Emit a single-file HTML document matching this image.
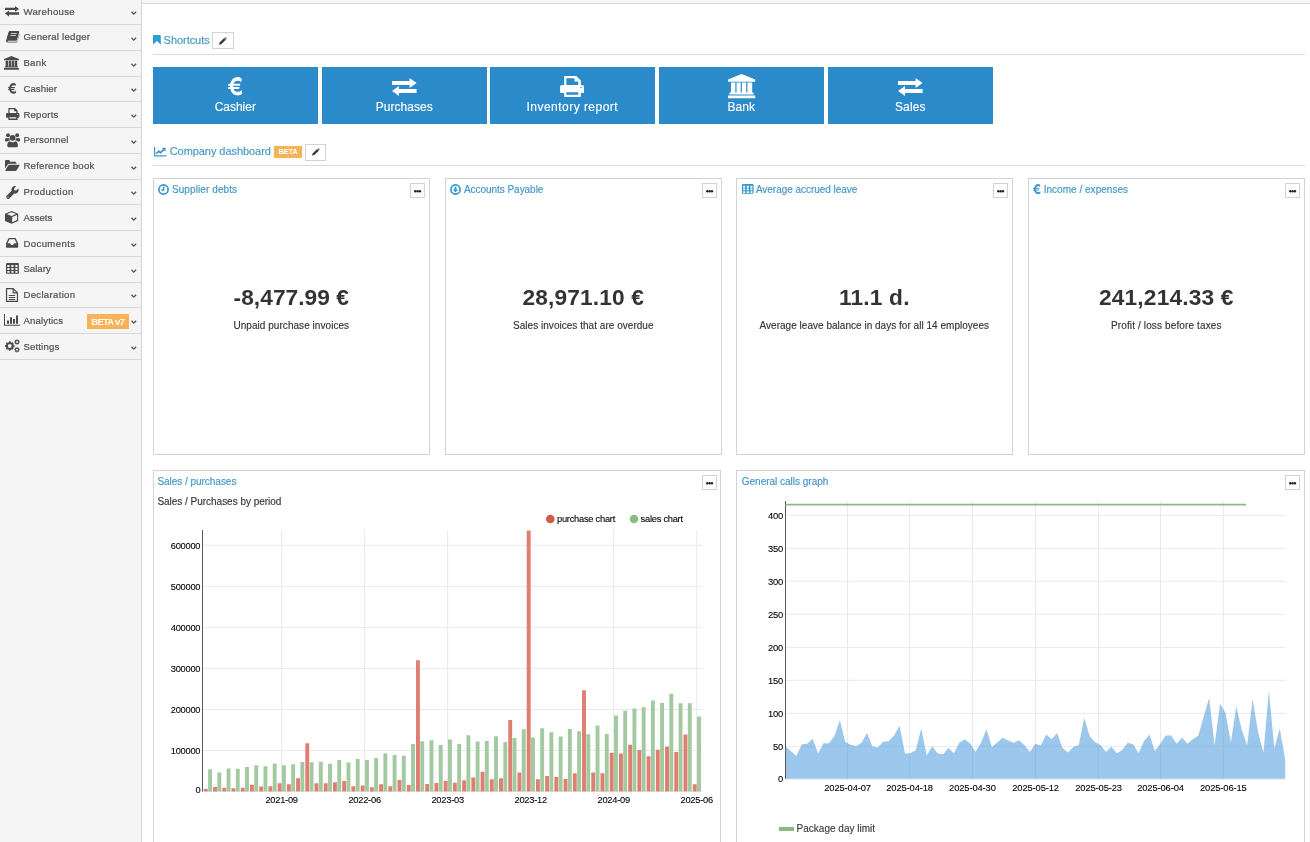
<!DOCTYPE html><html lang="en"><head><meta charset="utf-8"><title>Company dashboard</title><style>
html,body{margin:0;padding:0}
body{width:1310px;height:842px;overflow:hidden;background:#fff;position:relative;font-family:"Liberation Sans",sans-serif;}
#root{position:absolute;left:0;top:0;width:1310px;height:842px;will-change:transform}
.t{position:absolute;white-space:nowrap;display:block}
.ic{position:absolute;display:block;overflow:visible}
.abs{position:absolute;display:block;box-sizing:border-box}
#side{left:0;top:0;width:142px;height:842px;background:#f5f5f5;border-right:1px solid #d6d6d6}
.sep{left:0;width:141px;height:1px;background:#d7d7d7}
.hr{height:1px;background:#dcdcdc;left:153px;width:1152px}
.tile{background:#2a8aca;height:57px;width:165px;top:67px}
.card{border:1px solid #d3d3d3;background:#fff}
.btn{border:1px solid #d2d2d2;background:#fff}
.badge{background:#f7b356;color:#fff}
svg text{font-family:"Liberation Sans",sans-serif}

</style></head><body><div id="root">
<div class="abs" style="left:142px;top:0;width:1168px;height:4px;background:#f5f5f5;border-bottom:1px solid #d6d6d6"></div>
<div id="side" class="abs"></div>
<div class="abs sep" style="top:24px"></div>
<span class="t" style="left:23.40px;top:6.62px;font-size:9.6px;line-height:9.6px;color:#505050;letter-spacing:0.323px;-webkit-text-stroke:.2px #505050;">Warehouse</span>
<svg class="ic" style="left:4.90px;top:6.10px;color:#4a4a4a" width="14" height="10.4" viewBox="0 0 14 10.4" preserveAspectRatio="none" fill="currentColor"><path d="M0 1.75H10V0L14 2.9L10 5.8V4.05H0ZM14 6.35H4V4.6L0 7.5L4 10.4V8.65H14Z"/></svg>
<svg class="ic" style="left:131.00px;top:11.00px;color:#555" width="5.6" height="4.2" viewBox="0 0 5.6 4.2" preserveAspectRatio="none" fill="currentColor"><path fill="none" stroke="currentColor" stroke-width="1.35" d="M.5.7L2.8 3.1L5.1.7"/></svg>
<div class="abs sep" style="top:50px"></div>
<span class="t" style="left:23.40px;top:32.39px;font-size:9.6px;line-height:9.6px;color:#505050;letter-spacing:0.241px;-webkit-text-stroke:.2px #505050;">General ledger</span>
<svg class="ic" style="left:5.50px;top:31.15px;color:#4a4a4a" width="13.4" height="11.6" viewBox="0 0 14 12" preserveAspectRatio="none" fill="currentColor"><path fill-rule="evenodd" d="M3.9 0H13.1Q14.1 0 13.8 1L11.5 9.2Q11.3 10 10.4 10H2.2Q1.5 10 1.6 10.5Q1.7 11 2.4 11H11Q11.6 11 11.8 10.4L13.9 3.2Q14.2 3.6 14 4.2L11.9 11.1Q11.6 12 10.6 12H1.9Q.8 12 .3 11.2Q-.2 10.4.2 9.6L2.7.9Q3 0 3.9 0ZM5.4 2.2L5.2 3H11L11.2 2.2ZM4.8 4.2L4.6 5H10.4L10.6 4.2Z"/></svg>
<svg class="ic" style="left:131.00px;top:36.77px;color:#555" width="5.6" height="4.2" viewBox="0 0 5.6 4.2" preserveAspectRatio="none" fill="currentColor"><path fill="none" stroke="currentColor" stroke-width="1.35" d="M.5.7L2.8 3.1L5.1.7"/></svg>
<div class="abs sep" style="top:76px"></div>
<span class="t" style="left:23.40px;top:58.16px;font-size:9.6px;line-height:9.6px;color:#505050;letter-spacing:0.308px;-webkit-text-stroke:.2px #505050;">Bank</span>
<svg class="ic" style="left:4.00px;top:56.20px;color:#4a4a4a" width="14.9" height="13.7" viewBox="0 0 15 14" preserveAspectRatio="none" fill="currentColor"><path d="M7.5 0L15 3.1V4.4H0V3.1ZM1.64 4.85H4.05V10.67H1.64ZM4.7 4.85H7V10.67H4.7ZM7.66 4.85H10.05V10.67H7.66ZM10.72 4.85H13.35V10.67H10.72ZM.77 10.67H14.1V11.85H.77ZM0 12.4H15V14H0Z"/></svg>
<svg class="ic" style="left:131.00px;top:62.54px;color:#555" width="5.6" height="4.2" viewBox="0 0 5.6 4.2" preserveAspectRatio="none" fill="currentColor"><path fill="none" stroke="currentColor" stroke-width="1.35" d="M.5.7L2.8 3.1L5.1.7"/></svg>
<div class="abs sep" style="top:101px"></div>
<span class="t" style="left:23.40px;top:83.93px;font-size:9.6px;line-height:9.6px;color:#505050;letter-spacing:0.090px;-webkit-text-stroke:.2px #505050;">Cashier</span>
<svg class="ic" style="left:7.90px;top:83.05px;color:#4a4a4a" width="8.3" height="10.7" viewBox="0 0 9.4 10.8" preserveAspectRatio="none" fill="currentColor"><path d="M9 1.2L8.5 3Q7.6 2.2 6.4 2.2Q4.3 2.2 3.6 4H8L7.7 5.1H3.3Q3.3 5.5 3.3 5.9H7.5L7.2 7H3.6Q4.3 8.7 6.4 8.7Q7.7 8.7 8.8 7.8L9.2 9.8Q8 10.8 6.3 10.8Q2.5 10.8 1.5 7H0L.3 5.9H1.3Q1.2 5.5 1.3 5.1H0L.3 4H1.5Q2.5 0 6.4 0Q7.9 0 9 1.2Z"/></svg>
<svg class="ic" style="left:131.00px;top:88.31px;color:#555" width="5.6" height="4.2" viewBox="0 0 5.6 4.2" preserveAspectRatio="none" fill="currentColor"><path fill="none" stroke="currentColor" stroke-width="1.35" d="M.5.7L2.8 3.1L5.1.7"/></svg>
<div class="abs sep" style="top:127px"></div>
<span class="t" style="left:23.40px;top:109.70px;font-size:9.6px;line-height:9.6px;color:#505050;letter-spacing:0.234px;-webkit-text-stroke:.2px #505050;">Reports</span>
<svg class="ic" style="left:5.50px;top:107.90px;color:#4a4a4a" width="13.4" height="11.9" viewBox="0 0 14 12.4" preserveAspectRatio="none" fill="currentColor"><path fill-rule="evenodd" d="M2.45 0H9.5L12.15 2.6V5.3H12.8Q14 5.3 14 6.5V9.4Q14 10.05 13.4 10.05H12.15V12.4H2.45V10.05H.6Q0 10.05 0 9.4V6.5Q0 5.3 1.2 5.3H2.45ZM3.7 1.35H8.45V3.3H10.65V5.3H3.7ZM3.7 9.6H10.65V11.05H3.7ZM11.8 6.75A.47.47 0 1 0 12.74 6.75A.47.47 0 1 0 11.8 6.75Z"/></svg>
<svg class="ic" style="left:131.00px;top:114.08px;color:#555" width="5.6" height="4.2" viewBox="0 0 5.6 4.2" preserveAspectRatio="none" fill="currentColor"><path fill="none" stroke="currentColor" stroke-width="1.35" d="M.5.7L2.8 3.1L5.1.7"/></svg>
<div class="abs sep" style="top:153px"></div>
<span class="t" style="left:23.40px;top:135.47px;font-size:9.6px;line-height:9.6px;color:#505050;letter-spacing:0.225px;-webkit-text-stroke:.2px #505050;">Personnel</span>
<svg class="ic" style="left:4.50px;top:132.75px;color:#4a4a4a" width="15.2" height="14.2" viewBox="0 0 15 14" preserveAspectRatio="none" fill="currentColor"><circle cx="7.5" cy="4.8" r="2.8"/><path d="M3.4 14Q2.2 14 2.2 12.6Q2.2 9 4.6 8.2Q5.8 9.2 7.5 9.2Q9.2 9.2 10.4 8.2Q12.8 9 12.8 12.6Q12.8 14 11.6 14Z"/><circle cx="3" cy="2.2" r="1.9"/><circle cx="12" cy="2.2" r="1.9"/><path d="M0 7.2Q0 4.9 1.4 4.7Q2.1 5.2 3 5.2Q3.7 5.2 4.3 4.9Q4.2 6.2 5 7.4Q3 7.6 2.2 8.4H1Q0 8.4 0 7.2ZM15 7.2Q15 4.9 13.6 4.7Q12.9 5.2 12 5.2Q11.3 5.2 10.7 4.9Q10.8 6.2 10 7.4Q12 7.6 12.8 8.4H14Q15 8.4 15 7.2Z"/></svg>
<svg class="ic" style="left:131.00px;top:139.85px;color:#555" width="5.6" height="4.2" viewBox="0 0 5.6 4.2" preserveAspectRatio="none" fill="currentColor"><path fill="none" stroke="currentColor" stroke-width="1.35" d="M.5.7L2.8 3.1L5.1.7"/></svg>
<div class="abs sep" style="top:179px"></div>
<span class="t" style="left:23.40px;top:161.24px;font-size:9.6px;line-height:9.6px;color:#505050;letter-spacing:0.244px;-webkit-text-stroke:.2px #505050;">Reference book</span>
<svg class="ic" style="left:4.50px;top:159.80px;color:#4a4a4a" width="14.7" height="11" viewBox="0 0 15 11" preserveAspectRatio="none" fill="currentColor"><path d="M0 1.2Q0 0 1.2 0H3.8Q5 0 5 1.2V1.7H10.4Q11.6 1.7 11.6 2.9V3.8H4.5Q3.2 3.8 2.4 4.9L0 8.4ZM3.2 5.5Q3.8 4.7 4.8 4.7H14.4Q15.4 4.7 14.8 5.6L12.1 9.9Q11.4 11 10.2 11H.9Q-.1 11 .6 10Z"/></svg>
<svg class="ic" style="left:131.00px;top:165.62px;color:#555" width="5.6" height="4.2" viewBox="0 0 5.6 4.2" preserveAspectRatio="none" fill="currentColor"><path fill="none" stroke="currentColor" stroke-width="1.35" d="M.5.7L2.8 3.1L5.1.7"/></svg>
<div class="abs sep" style="top:204px"></div>
<span class="t" style="left:23.40px;top:187.01px;font-size:9.6px;line-height:9.6px;color:#505050;letter-spacing:0.447px;-webkit-text-stroke:.2px #505050;">Production</span>
<svg class="ic" style="left:6.10px;top:185.85px;color:#4a4a4a" width="12.5" height="13.1" viewBox="0 0 12.6 13.2" preserveAspectRatio="none" fill="currentColor"><path d="M12.4 2.5L10.3 4.6L8.5 4.2L8.1 2.4L10.2.3A3.6 3.6 0 0 0 5.6 4.9L.4 10.1Q-.3 10.9.4 11.9L1.3 12.8Q2.3 13.5 3.1 12.8L8.3 7.6A3.6 3.6 0 0 0 12.4 2.5ZM1.4 11.1A.6.6 0 1 0 2.6 11.1A.6.6 0 1 0 1.4 11.1Z" fill-rule="evenodd"/></svg>
<svg class="ic" style="left:131.00px;top:191.39px;color:#555" width="5.6" height="4.2" viewBox="0 0 5.6 4.2" preserveAspectRatio="none" fill="currentColor"><path fill="none" stroke="currentColor" stroke-width="1.35" d="M.5.7L2.8 3.1L5.1.7"/></svg>
<div class="abs sep" style="top:230px"></div>
<span class="t" style="left:23.40px;top:212.78px;font-size:9.6px;line-height:9.6px;color:#505050;letter-spacing:0.021px;-webkit-text-stroke:.2px #505050;">Assets</span>
<svg class="ic" style="left:4.90px;top:211.00px;color:#4a4a4a" width="13.2" height="12.8" viewBox="0 0 13.2 12.8" preserveAspectRatio="none" fill="currentColor"><path d="M6.6 0L13.2 2.7V9.9L6.6 12.8L0 9.9V2.7ZM6.6 1.2L2 3.1L6.6 5L11.2 3.1ZM7.2 6V11.3L12.1 9.1V4Z" fill-rule="evenodd"/></svg>
<svg class="ic" style="left:131.00px;top:217.16px;color:#555" width="5.6" height="4.2" viewBox="0 0 5.6 4.2" preserveAspectRatio="none" fill="currentColor"><path fill="none" stroke="currentColor" stroke-width="1.35" d="M.5.7L2.8 3.1L5.1.7"/></svg>
<div class="abs sep" style="top:256px"></div>
<span class="t" style="left:23.40px;top:238.55px;font-size:9.6px;line-height:9.6px;color:#505050;letter-spacing:0.396px;-webkit-text-stroke:.2px #505050;">Documents</span>
<svg class="ic" style="left:5.90px;top:238.15px;color:#4a4a4a" width="12.2" height="9.7" viewBox="0 0 12.2 9.8" preserveAspectRatio="none" fill="currentColor"><path fill-rule="evenodd" d="M2.7 0H9.5L12.2 5.3V9Q12.2 9.8 11.4 9.8H.8Q0 9.8 0 9V5.3ZM3.5 1.2L1.6 5.4H4.2L5 7H7.2L8 5.4H10.6L8.7 1.2Z"/></svg>
<svg class="ic" style="left:131.00px;top:242.93px;color:#555" width="5.6" height="4.2" viewBox="0 0 5.6 4.2" preserveAspectRatio="none" fill="currentColor"><path fill="none" stroke="currentColor" stroke-width="1.35" d="M.5.7L2.8 3.1L5.1.7"/></svg>
<div class="abs sep" style="top:282px"></div>
<span class="t" style="left:23.40px;top:264.32px;font-size:9.6px;line-height:9.6px;color:#505050;letter-spacing:0.019px;-webkit-text-stroke:.2px #505050;">Salary</span>
<svg class="ic" style="left:5.70px;top:263.10px;color:#4a4a4a" width="12.9" height="10.8" viewBox="0 0 13 10.8" preserveAspectRatio="none" fill="currentColor"><path fill-rule="evenodd" d="M1.1 0H11.9Q13 0 13 1.1V9.7Q13 10.8 11.9 10.8H1.1Q0 10.8 0 9.7V1.1Q0 0 1.1 0ZM1.3 1.9V4.0H3.6V1.9ZM5.35 1.9V4.0H7.65V1.9ZM9.4 1.9V4.0H11.7V1.9ZM1.3 5.0V7.0H3.6V5.0ZM5.35 5.0V7.0H7.65V5.0ZM9.4 5.0V7.0H11.7V5.0ZM1.3 8.0V9.8H3.6V8.0ZM5.35 8.0V9.8H7.65V8.0ZM9.4 8.0V9.8H11.7V8.0Z"/></svg>
<svg class="ic" style="left:131.00px;top:268.70px;color:#555" width="5.6" height="4.2" viewBox="0 0 5.6 4.2" preserveAspectRatio="none" fill="currentColor"><path fill="none" stroke="currentColor" stroke-width="1.35" d="M.5.7L2.8 3.1L5.1.7"/></svg>
<div class="abs sep" style="top:307px"></div>
<span class="t" style="left:23.40px;top:290.09px;font-size:9.6px;line-height:9.6px;color:#505050;letter-spacing:0.317px;-webkit-text-stroke:.2px #505050;">Declaration</span>
<svg class="ic" style="left:6.00px;top:288.00px;color:#4a4a4a" width="12" height="14" viewBox="0 0 12 14" preserveAspectRatio="none" fill="currentColor"><path fill="none" stroke="currentColor" stroke-width="1.2" d="M.55.55H7.2L11.45 4.8V13.45H.55ZM7.2.55V4.8H11.45"/><path fill="none" stroke="currentColor" stroke-width="1" d="M2.8 7.5H9.2M2.8 9.5H9.2M2.8 11.5H9.2"/></svg>
<svg class="ic" style="left:131.00px;top:294.47px;color:#555" width="5.6" height="4.2" viewBox="0 0 5.6 4.2" preserveAspectRatio="none" fill="currentColor"><path fill="none" stroke="currentColor" stroke-width="1.35" d="M.5.7L2.8 3.1L5.1.7"/></svg>
<div class="abs sep" style="top:333px"></div>
<span class="t" style="left:23.40px;top:315.86px;font-size:9.6px;line-height:9.6px;color:#505050;letter-spacing:0.164px;-webkit-text-stroke:.2px #505050;">Analytics</span>
<svg class="ic" style="left:3.90px;top:314.20px;color:#4a4a4a" width="16" height="11.8" viewBox="0 0 16 11.8" preserveAspectRatio="none" fill="currentColor"><path d="M0 0H1V10.8H16V11.8H0ZM3 6.6H5V9.8H3ZM6 3.3H8V9.8H6ZM9 5H11V9.8H9ZM12 1.4H14V9.8H12Z"/></svg>
<svg class="ic" style="left:131.00px;top:320.24px;color:#555" width="5.6" height="4.2" viewBox="0 0 5.6 4.2" preserveAspectRatio="none" fill="currentColor"><path fill="none" stroke="currentColor" stroke-width="1.35" d="M.5.7L2.8 3.1L5.1.7"/></svg>
<div class="abs sep" style="top:359px"></div>
<span class="t" style="left:23.40px;top:341.63px;font-size:9.6px;line-height:9.6px;color:#505050;letter-spacing:0.161px;-webkit-text-stroke:.2px #505050;">Settings</span>
<svg class="ic" style="left:4.50px;top:339.25px;color:#4a4a4a" width="15" height="13.7" viewBox="0 0 15 13.7" preserveAspectRatio="none" fill="currentColor"><path fill-rule="evenodd" d="M8.63 6.08L9.55 6.29L9.55 7.71L8.63 7.92L8.16 9.06L8.66 9.85L7.65 10.86L6.86 10.36L5.72 10.83L5.51 11.75L4.09 11.75L3.88 10.83L2.74 10.36L1.95 10.86L0.94 9.85L1.44 9.06L0.97 7.92L0.05 7.71L0.05 6.29L0.97 6.08L1.44 4.94L0.94 4.15L1.95 3.14L2.74 3.64L3.88 3.17L4.09 2.25L5.51 2.25L5.72 3.17L6.86 3.64L7.65 3.14L8.66 4.15L8.16 4.94ZM2.90 7.00A1.9 1.9 0 1 0 6.70 7.00A1.9 1.9 0 1 0 2.90 7.00ZM13.96 2.53L14.77 2.58L14.77 3.42L13.96 3.47L13.72 4.05L14.25 4.66L13.66 5.25L13.05 4.72L12.47 4.96L12.42 5.77L11.58 5.77L11.53 4.96L10.95 4.72L10.34 5.25L9.75 4.66L10.28 4.05L10.04 3.47L9.23 3.42L9.23 2.58L10.04 2.53L10.28 1.95L9.75 1.34L10.34 0.75L10.95 1.28L11.53 1.04L11.58 0.23L12.42 0.23L12.47 1.04L13.05 1.28L13.66 0.75L14.25 1.34L13.72 1.95ZM11.00 3.00A1.0 1.0 0 1 0 13.00 3.00A1.0 1.0 0 1 0 11.00 3.00ZM13.96 10.23L14.77 10.28L14.77 11.12L13.96 11.17L13.72 11.75L14.25 12.36L13.66 12.95L13.05 12.42L12.47 12.66L12.42 13.47L11.58 13.47L11.53 12.66L10.95 12.42L10.34 12.95L9.75 12.36L10.28 11.75L10.04 11.17L9.23 11.12L9.23 10.28L10.04 10.23L10.28 9.65L9.75 9.04L10.34 8.45L10.95 8.98L11.53 8.74L11.58 7.93L12.42 7.93L12.47 8.74L13.05 8.98L13.66 8.45L14.25 9.04L13.72 9.65ZM11.00 10.70A1.0 1.0 0 1 0 13.00 10.70A1.0 1.0 0 1 0 11.00 10.70Z"/></svg>
<svg class="ic" style="left:131.00px;top:346.01px;color:#555" width="5.6" height="4.2" viewBox="0 0 5.6 4.2" preserveAspectRatio="none" fill="currentColor"><path fill="none" stroke="currentColor" stroke-width="1.35" d="M.5.7L2.8 3.1L5.1.7"/></svg>
<div class="abs badge" style="left:87px;top:314px;width:42px;height:15px"></div>
<span class="t" style="left:91.30px;top:317.16px;font-size:9.5px;line-height:9.5px;color:#fff;font-weight:bold;letter-spacing:-0.753px;">BETA v7</span>
<svg class="ic" style="left:153.20px;top:35.40px;color:#2f9bd6" width="7.8" height="9.4" viewBox="0 0 7.8 9.4" preserveAspectRatio="none" fill="currentColor"><path d="M.8 0H7Q7.8 0 7.8.8V9.4L3.9 6L0 9.4V.8Q0 0 .8 0Z"/></svg>
<span class="t" style="left:163.60px;top:34.69px;font-size:11px;line-height:11px;color:#3f95c5;-webkit-text-stroke:.14px #3f95c5;letter-spacing:-0.046px;">Shortcuts</span>
<div class="abs btn" style="left:212px;top:32px;width:22px;height:17px"></div>
<svg class="ic" style="left:219.00px;top:37.00px;color:#3a3a3a" width="8.0" height="7.7" viewBox="0 0 8.5 8.5" preserveAspectRatio="none" fill="currentColor"><path d="M0 8.5L.6 6.1L5.5 1.2L7.3 3L2.4 7.9ZM6.1.6Q6.6.1 7.1.6L7.9 1.4Q8.4 1.9 7.9 2.4L7.7 2.6L5.9.8Z"/></svg>
<div class="abs hr" style="top:54px"></div>
<div class="abs tile" style="left:153px"></div>
<span class="t" style="left:155.30px;width:160px;text-align:center;top:101.04px;font-size:12px;line-height:12px;color:#fff;-webkit-text-stroke:.14px #fff;letter-spacing:-0.027px;"><span>Cashier</span></span>
<svg class="ic" style="left:228.05px;top:77.30px;color:#fff" width="14.5" height="18.4" viewBox="0 0 9.4 10.8" preserveAspectRatio="none" fill="currentColor"><path d="M9 1.2L8.5 3Q7.6 2.2 6.4 2.2Q4.3 2.2 3.6 4H8L7.7 5.1H3.3Q3.3 5.5 3.3 5.9H7.5L7.2 7H3.6Q4.3 8.7 6.4 8.7Q7.7 8.7 8.8 7.8L9.2 9.8Q8 10.8 6.3 10.8Q2.5 10.8 1.5 7H0L.3 5.9H1.3Q1.2 5.5 1.3 5.1H0L.3 4H1.5Q2.5 0 6.4 0Q7.9 0 9 1.2Z"/></svg>
<div class="abs tile" style="left:322px"></div>
<span class="t" style="left:324.30px;width:160px;text-align:center;top:101.04px;font-size:12px;line-height:12px;color:#fff;-webkit-text-stroke:.14px #fff;letter-spacing:0.025px;"><span>Purchases</span></span>
<svg class="ic" style="left:392.00px;top:78.30px;color:#fff" width="24.6" height="17.9" viewBox="0 0 14 10.4" preserveAspectRatio="none" fill="currentColor"><path d="M0 1.75H10V0L14 2.9L10 5.8V4.05H0ZM14 6.35H4V4.6L0 7.5L4 10.4V8.65H14Z"/></svg>
<div class="abs tile" style="left:490px"></div>
<span class="t" style="left:492.30px;width:160px;text-align:center;top:101.04px;font-size:12px;line-height:12px;color:#fff;-webkit-text-stroke:.14px #fff;letter-spacing:0.470px;"><span>Inventory report</span></span>
<svg class="ic" style="left:560.30px;top:75.60px;color:#fff" width="24" height="21" viewBox="0 0 14 12.4" preserveAspectRatio="none" fill="currentColor"><path fill-rule="evenodd" d="M2.45 0H9.5L12.15 2.6V5.3H12.8Q14 5.3 14 6.5V9.4Q14 10.05 13.4 10.05H12.15V12.4H2.45V10.05H.6Q0 10.05 0 9.4V6.5Q0 5.3 1.2 5.3H2.45ZM3.7 1.35H8.45V3.3H10.65V5.3H3.7ZM3.7 9.6H10.65V11.05H3.7ZM11.8 6.75A.47.47 0 1 0 12.74 6.75A.47.47 0 1 0 11.8 6.75Z"/></svg>
<div class="abs tile" style="left:659px"></div>
<span class="t" style="left:661.30px;width:160px;text-align:center;top:101.04px;font-size:12px;line-height:12px;color:#fff;-webkit-text-stroke:.14px #fff;letter-spacing:0.047px;"><span>Bank</span></span>
<svg class="ic" style="left:727.70px;top:74.20px;color:#fff" width="27.2" height="24.3" viewBox="0 0 15 14" preserveAspectRatio="none" fill="currentColor"><path d="M7.5 0L15 3.1V4.4H0V3.1ZM1.64 4.85H4.05V10.67H1.64ZM4.7 4.85H7V10.67H4.7ZM7.66 4.85H10.05V10.67H7.66ZM10.72 4.85H13.35V10.67H10.72ZM.77 10.67H14.1V11.85H.77ZM0 12.4H15V14H0Z"/></svg>
<div class="abs tile" style="left:828px"></div>
<span class="t" style="left:830.30px;width:160px;text-align:center;top:101.04px;font-size:12px;line-height:12px;color:#fff;-webkit-text-stroke:.14px #fff;letter-spacing:0.117px;"><span>Sales</span></span>
<svg class="ic" style="left:898.00px;top:78.30px;color:#fff" width="24.6" height="17.9" viewBox="0 0 14 10.4" preserveAspectRatio="none" fill="currentColor"><path d="M0 1.75H10V0L14 2.9L10 5.8V4.05H0ZM14 6.35H4V4.6L0 7.5L4 10.4V8.65H14Z"/></svg>
<svg class="ic" style="left:153.80px;top:146.80px;color:#3f95c5" width="12.4" height="9.4" viewBox="0 0 12.4 9.6" preserveAspectRatio="none" fill="currentColor"><path d="M0 0H1.2V8.4H12.4V9.6H0Z"/><path fill="none" stroke="currentColor" stroke-width="1.8" d="M2.2 6.9L4.7 4.3L6.4 6L9.9 2.4"/><path d="M7.8.7H11.6V4.5Z"/></svg>
<span class="t" style="left:169.70px;top:145.69px;font-size:11px;line-height:11px;color:#3f95c5;-webkit-text-stroke:.14px #3f95c5;letter-spacing:-0.058px;">Company dashboard</span>
<div class="abs badge" style="left:274px;top:146px;width:28px;height:12px"></div>
<span class="t" style="left:278.60px;top:148.45px;font-size:7.5px;line-height:7.5px;color:#fff;font-weight:bold;letter-spacing:-0.225px;">BETA</span>
<div class="abs btn" style="left:305px;top:144px;width:21px;height:17px"></div>
<svg class="ic" style="left:311.80px;top:148.30px;color:#3a3a3a" width="8.0" height="7.5" viewBox="0 0 8.5 8.5" preserveAspectRatio="none" fill="currentColor"><path d="M0 8.5L.6 6.1L5.5 1.2L7.3 3L2.4 7.9ZM6.1.6Q6.6.1 7.1.6L7.9 1.4Q8.4 1.9 7.9 2.4L7.7 2.6L5.9.8Z"/></svg>
<div class="abs hr" style="top:165px"></div>
<div class="abs card" style="left:153px;top:178px;width:277px;height:277px"></div>
<svg class="ic" style="left:157.60px;top:183.90px;color:#3398cc" width="11" height="11" viewBox="0 0 10.6 10.6" preserveAspectRatio="none" fill="currentColor"><circle cx="5.3" cy="5.3" r="4.45" fill="none" stroke="currentColor" stroke-width="1.6"/><path fill="none" stroke="currentColor" stroke-width="1.3" d="M5.5 2.5V5.8H3.2"/></svg>
<span class="t" style="left:171.90px;top:185.23px;font-size:10px;line-height:10px;color:#3f95c5;-webkit-text-stroke:.14px #3f95c5;letter-spacing:0.097px;">Supplier debts</span>
<div class="abs btn" style="left:410px;top:183px;width:15px;height:15px"></div>
<svg class="ic" style="left:413.90px;top:189.50px;color:#222" width="7.2" height="2.6" viewBox="0 0 7.2 2.6" preserveAspectRatio="none" fill="currentColor"><circle cx="1.25" cy="1.3" r="1.2"/><circle cx="3.6" cy="1.3" r="1.2"/><circle cx="5.95" cy="1.3" r="1.2"/></svg>
<span class="t" style="left:153.30px;width:276px;text-align:center;top:285.98px;font-size:22.7px;line-height:22.7px;color:#333;font-weight:bold;letter-spacing:0.060px;"><span>-8,477.99 €</span></span>
<span class="t" style="left:153.30px;width:276px;text-align:center;top:320.54px;font-size:10px;line-height:10px;color:#333;-webkit-text-stroke:.14px #333;letter-spacing:0.047px;"><span>Unpaid purchase invoices</span></span>
<div class="abs card" style="left:445px;top:178px;width:277px;height:277px"></div>
<svg class="ic" style="left:449.60px;top:183.90px;color:#3398cc" width="11" height="11" viewBox="0 0 10.6 10.6" preserveAspectRatio="none" fill="currentColor"><circle cx="5.3" cy="5.3" r="4.45" fill="none" stroke="currentColor" stroke-width="1.6"/><path d="M4.4 2.6H6.2V5.2H7.9L5.3 8.1L2.7 5.2H4.4Z"/></svg>
<span class="t" style="left:463.90px;top:185.23px;font-size:10px;line-height:10px;color:#3f95c5;-webkit-text-stroke:.14px #3f95c5;letter-spacing:-0.037px;">Accounts Payable</span>
<div class="abs btn" style="left:702px;top:183px;width:15px;height:15px"></div>
<svg class="ic" style="left:705.90px;top:189.50px;color:#222" width="7.2" height="2.6" viewBox="0 0 7.2 2.6" preserveAspectRatio="none" fill="currentColor"><circle cx="1.25" cy="1.3" r="1.2"/><circle cx="3.6" cy="1.3" r="1.2"/><circle cx="5.95" cy="1.3" r="1.2"/></svg>
<span class="t" style="left:445.30px;width:276px;text-align:center;top:285.98px;font-size:22.7px;line-height:22.7px;color:#333;font-weight:bold;letter-spacing:0.164px;"><span>28,971.10 €</span></span>
<span class="t" style="left:445.30px;width:276px;text-align:center;top:320.54px;font-size:10px;line-height:10px;color:#333;-webkit-text-stroke:.14px #333;letter-spacing:0.032px;"><span>Sales invoices that are overdue</span></span>
<div class="abs card" style="left:736px;top:178px;width:277px;height:277px"></div>
<svg class="ic" style="left:741.60px;top:184.00px;color:#3398cc" width="11.6" height="9.8" viewBox="0 0 13 10.8" preserveAspectRatio="none" fill="currentColor"><path fill-rule="evenodd" d="M1.1 0H11.9Q13 0 13 1.1V9.7Q13 10.8 11.9 10.8H1.1Q0 10.8 0 9.7V1.1Q0 0 1.1 0ZM1.3 1.9V4.0H3.6V1.9ZM5.35 1.9V4.0H7.65V1.9ZM9.4 1.9V4.0H11.7V1.9ZM1.3 5.0V7.0H3.6V5.0ZM5.35 5.0V7.0H7.65V5.0ZM9.4 5.0V7.0H11.7V5.0ZM1.3 8.0V9.8H3.6V8.0ZM5.35 8.0V9.8H7.65V8.0ZM9.4 8.0V9.8H11.7V8.0Z"/></svg>
<span class="t" style="left:755.90px;top:185.23px;font-size:10px;line-height:10px;color:#3f95c5;-webkit-text-stroke:.14px #3f95c5;letter-spacing:-0.030px;">Average accrued leave</span>
<div class="abs btn" style="left:993px;top:183px;width:15px;height:15px"></div>
<svg class="ic" style="left:996.90px;top:189.50px;color:#222" width="7.2" height="2.6" viewBox="0 0 7.2 2.6" preserveAspectRatio="none" fill="currentColor"><circle cx="1.25" cy="1.3" r="1.2"/><circle cx="3.6" cy="1.3" r="1.2"/><circle cx="5.95" cy="1.3" r="1.2"/></svg>
<span class="t" style="left:736.30px;width:276px;text-align:center;top:285.98px;font-size:22.7px;line-height:22.7px;color:#333;font-weight:bold;letter-spacing:0.188px;"><span>11.1 d.</span></span>
<span class="t" style="left:736.30px;width:276px;text-align:center;top:320.54px;font-size:10px;line-height:10px;color:#333;-webkit-text-stroke:.14px #333;letter-spacing:0.025px;"><span>Average leave balance in days for all 14 employees</span></span>
<div class="abs card" style="left:1028px;top:178px;width:277px;height:277px"></div>
<svg class="ic" style="left:1033.20px;top:183.90px;color:#3398cc" width="7.7" height="10.2" viewBox="0 0 9.4 10.8" preserveAspectRatio="none" fill="currentColor"><path d="M9 1.2L8.5 3Q7.6 2.2 6.4 2.2Q4.3 2.2 3.6 4H8L7.7 5.1H3.3Q3.3 5.5 3.3 5.9H7.5L7.2 7H3.6Q4.3 8.7 6.4 8.7Q7.7 8.7 8.8 7.8L9.2 9.8Q8 10.8 6.3 10.8Q2.5 10.8 1.5 7H0L.3 5.9H1.3Q1.2 5.5 1.3 5.1H0L.3 4H1.5Q2.5 0 6.4 0Q7.9 0 9 1.2Z"/></svg>
<span class="t" style="left:1043.70px;top:185.23px;font-size:10px;line-height:10px;color:#3f95c5;-webkit-text-stroke:.14px #3f95c5;letter-spacing:0.023px;">Income / expenses</span>
<div class="abs btn" style="left:1285px;top:183px;width:15px;height:15px"></div>
<svg class="ic" style="left:1288.90px;top:189.50px;color:#222" width="7.2" height="2.6" viewBox="0 0 7.2 2.6" preserveAspectRatio="none" fill="currentColor"><circle cx="1.25" cy="1.3" r="1.2"/><circle cx="3.6" cy="1.3" r="1.2"/><circle cx="5.95" cy="1.3" r="1.2"/></svg>
<span class="t" style="left:1028.30px;width:276px;text-align:center;top:285.98px;font-size:22.7px;line-height:22.7px;color:#333;font-weight:bold;letter-spacing:0.183px;"><span>241,214.33 €</span></span>
<span class="t" style="left:1028.30px;width:276px;text-align:center;top:320.54px;font-size:10px;line-height:10px;color:#333;-webkit-text-stroke:.14px #333;letter-spacing:0.129px;"><span>Profit / loss before taxes</span></span>
<div class="abs card" style="left:153px;top:470px;width:568px;height:400px"></div>
<div class="abs card" style="left:736px;top:470px;width:569px;height:400px"></div>
<span class="t" style="left:157.40px;top:477.24px;font-size:10px;line-height:10px;color:#3f95c5;-webkit-text-stroke:.14px #3f95c5;letter-spacing:-0.031px;">Sales / purchases</span>
<span class="t" style="left:157.40px;top:496.54px;font-size:10px;line-height:10px;color:#333;-webkit-text-stroke:.14px #333;letter-spacing:-0.020px;">Sales / Purchases by period</span>
<span class="t" style="left:741.80px;top:477.24px;font-size:10px;line-height:10px;color:#3f95c5;-webkit-text-stroke:.14px #3f95c5;letter-spacing:-0.012px;">General calls graph</span>
<div class="abs btn" style="left:702px;top:475px;width:15px;height:15px"></div>
<svg class="ic" style="left:705.90px;top:481.50px;color:#222" width="7.2" height="2.6" viewBox="0 0 7.2 2.6" preserveAspectRatio="none" fill="currentColor"><circle cx="1.25" cy="1.3" r="1.2"/><circle cx="3.6" cy="1.3" r="1.2"/><circle cx="5.95" cy="1.3" r="1.2"/></svg>
<div class="abs btn" style="left:1285px;top:475px;width:15px;height:15px"></div>
<svg class="ic" style="left:1288.90px;top:481.50px;color:#222" width="7.2" height="2.6" viewBox="0 0 7.2 2.6" preserveAspectRatio="none" fill="currentColor"><circle cx="1.25" cy="1.3" r="1.2"/><circle cx="3.6" cy="1.3" r="1.2"/><circle cx="5.95" cy="1.3" r="1.2"/></svg>
<svg class="ic" style="left:0;top:0" width="1310" height="842" viewBox="0 0 1310 842"><path d="M203 791.60H702.4M203 750.54H702.4M203 709.48H702.4M203 668.42H702.4M203 627.36H702.4M203 586.30H702.4M203 545.24H702.4M281.61 530V791.6M364.63 530V791.6M447.65 530V791.6M530.67 530V791.6M613.69 530V791.6M696.71 530V791.6" stroke="#e9e9e9" stroke-width="1" fill="none"/><path d="M202.5 530V791.6" stroke="#5a5a5a" stroke-width="1" fill="none"/><path d="M203.85 791.60v-2.70h3.9v2.70zM213.07 791.60v-4.60h3.9v4.60zM222.30 791.60v-3.80h3.9v3.80zM231.52 791.60v-3.40h3.9v3.40zM240.75 791.60v-3.80h3.9v3.80zM249.97 791.60v-6.80h3.9v6.80zM259.20 791.60v-5.10h3.9v5.10zM268.42 791.60v-5.40h3.9v5.40zM277.65 791.60v-8.40h3.9v8.40zM286.87 791.60v-7.40h3.9v7.40zM296.09 791.60v-13.40h3.9v13.40zM305.32 791.60v-48.30h3.9v48.30zM314.54 791.60v-8.30h3.9v8.30zM323.77 791.60v-8.40h3.9v8.40zM332.99 791.60v-9.30h3.9v9.30zM342.22 791.60v-10.50h3.9v10.50zM351.44 791.60v-5.40h3.9v5.40zM360.67 791.60v-6.00h3.9v6.00zM369.89 791.60v-4.40h3.9v4.40zM379.12 791.60v-7.30h3.9v7.30zM388.34 791.60v-5.40h3.9v5.40zM397.56 791.60v-11.70h3.9v11.70zM406.79 791.60v-6.70h3.9v6.70zM416.01 791.60v-131.40h3.9v131.40zM425.24 791.60v-7.70h3.9v7.70zM434.46 791.60v-8.70h3.9v8.70zM443.69 791.60v-10.50h3.9v10.50zM452.91 791.60v-8.80h3.9v8.80zM462.14 791.60v-11.40h3.9v11.40zM471.36 791.60v-14.00h3.9v14.00zM480.58 791.60v-19.80h3.9v19.80zM489.81 791.60v-12.40h3.9v12.40zM499.03 791.60v-13.30h3.9v13.30zM508.26 791.60v-71.50h3.9v71.50zM517.48 791.60v-19.20h3.9v19.20zM526.71 791.60v-261.10h3.9v261.10zM535.93 791.60v-12.40h3.9v12.40zM545.16 791.60v-15.50h3.9v15.50zM554.38 791.60v-14.50h3.9v14.50zM563.61 791.60v-12.50h3.9v12.50zM572.83 791.60v-18.40h3.9v18.40zM582.05 791.60v-101.40h3.9v101.40zM591.28 791.60v-19.20h3.9v19.20zM600.50 791.60v-18.40h3.9v18.40zM609.73 791.60v-38.80h3.9v38.80zM618.95 791.60v-38.20h3.9v38.20zM628.18 791.60v-46.90h3.9v46.90zM637.40 791.60v-41.50h3.9v41.50zM646.63 791.60v-35.30h3.9v35.30zM655.85 791.60v-41.80h3.9v41.80zM665.07 791.60v-45.20h3.9v45.20zM674.30 791.60v-39.60h3.9v39.60zM683.52 791.60v-57.10h3.9v57.10zM692.75 791.60v-7.40h3.9v7.40z" fill="#de8071"/><path d="M208.15 791.60v-22.40h3.9v22.40zM217.37 791.60v-19.20h3.9v19.20zM226.60 791.60v-23.20h3.9v23.20zM235.82 791.60v-22.90h3.9v22.90zM245.05 791.60v-24.50h3.9v24.50zM254.27 791.60v-26.40h3.9v26.40zM263.50 791.60v-25.40h3.9v25.40zM272.72 791.60v-28.20h3.9v28.20zM281.95 791.60v-26.40h3.9v26.40zM291.17 791.60v-27.40h3.9v27.40zM300.39 791.60v-29.50h3.9v29.50zM309.62 791.60v-29.40h3.9v29.40zM318.84 791.60v-29.80h3.9v29.80zM328.07 791.60v-27.90h3.9v27.90zM337.29 791.60v-31.60h3.9v31.60zM346.52 791.60v-29.20h3.9v29.20zM355.74 791.60v-32.50h3.9v32.50zM364.97 791.60v-31.50h3.9v31.50zM374.19 791.60v-33.50h3.9v33.50zM383.42 791.60v-38.30h3.9v38.30zM392.64 791.60v-36.50h3.9v36.50zM401.86 791.60v-35.90h3.9v35.90zM411.09 791.60v-47.50h3.9v47.50zM420.31 791.60v-50.40h3.9v50.40zM429.54 791.60v-51.40h3.9v51.40zM438.76 791.60v-46.50h3.9v46.50zM447.99 791.60v-52.20h3.9v52.20zM457.21 791.60v-47.70h3.9v47.70zM466.44 791.60v-56.30h3.9v56.30zM475.66 791.60v-50.20h3.9v50.20zM484.88 791.60v-50.60h3.9v50.60zM494.11 791.60v-55.40h3.9v55.40zM503.33 791.60v-49.60h3.9v49.60zM512.56 791.60v-53.70h3.9v53.70zM521.78 791.60v-62.30h3.9v62.30zM531.01 791.60v-54.00h3.9v54.00zM540.23 791.60v-63.40h3.9v63.40zM549.46 791.60v-59.30h3.9v59.30zM558.68 791.60v-55.00h3.9v55.00zM567.91 791.60v-62.70h3.9v62.70zM577.13 791.60v-60.30h3.9v60.30zM586.35 791.60v-57.40h3.9v57.40zM595.58 791.60v-66.10h3.9v66.10zM604.80 791.60v-57.70h3.9v57.70zM614.03 791.60v-76.20h3.9v76.20zM623.25 791.60v-80.80h3.9v80.80zM632.48 791.60v-83.20h3.9v83.20zM641.70 791.60v-84.40h3.9v84.40zM650.93 791.60v-91.20h3.9v91.20zM660.15 791.60v-88.60h3.9v88.60zM669.38 791.60v-97.90h3.9v97.90zM678.60 791.60v-88.40h3.9v88.40zM687.82 791.60v-88.40h3.9v88.40zM697.05 791.60v-75.00h3.9v75.00z" fill="#a2c99f"/><g font-size="9.3" letter-spacing="-0.25" fill="#000" stroke="#000" stroke-width=".1"><text x="200.3" y="793.20" text-anchor="end">0</text><text x="200.3" y="754.14" text-anchor="end">100000</text><text x="200.3" y="713.08" text-anchor="end">200000</text><text x="200.3" y="672.02" text-anchor="end">300000</text><text x="200.3" y="630.96" text-anchor="end">400000</text><text x="200.3" y="589.90" text-anchor="end">500000</text><text x="200.3" y="548.84" text-anchor="end">600000</text><text x="281.61" y="803" text-anchor="middle">2021-09</text><text x="364.63" y="803" text-anchor="middle">2022-06</text><text x="447.65" y="803" text-anchor="middle">2023-03</text><text x="530.67" y="803" text-anchor="middle">2023-12</text><text x="613.69" y="803" text-anchor="middle">2024-09</text><text x="696.71" y="803" text-anchor="middle">2025-06</text><text x="557" y="522.1">purchase chart</text><text x="640.6" y="522.1">sales chart</text></g><circle cx="550.3" cy="519" r="4.3" fill="#cd5c48"/><circle cx="634" cy="519" r="4.3" fill="#8cbf7f"/></svg>
<svg class="ic" style="left:0;top:0" width="1310" height="842" viewBox="0 0 1310 842"><path d="M785.5 779.30H1285.4M785.5 746.30H1285.4M785.5 713.30H1285.4M785.5 680.30H1285.4M785.5 647.30H1285.4M785.5 614.30H1285.4M785.5 581.30H1285.4M785.5 548.30H1285.4M785.5 515.30H1285.4M847.55 501V779.3M909.60 501V779.3M972.45 501V779.3M1035.55 501V779.3M1098.60 501V779.3M1160.50 501V779.3M1223.30 501V779.3" stroke="#e9e9e9" stroke-width="1" fill="none"/><path d="M785.50 778.70L785.50 746.34L790.93 751.29L796.36 756.03L801.79 744.28L807.23 743.66L812.66 738.72L818.09 753.56L823.52 743.25L828.95 743.25L834.38 736.04L839.82 720.17L845.25 741.81L850.68 744.69L856.11 746.34L861.54 742.63L866.97 732.95L872.40 746.34L877.84 747.58L883.27 741.60L888.70 741.19L894.13 735.62L899.56 725.73L904.99 753.56L910.42 753.35L915.86 750.05L921.29 728.62L926.72 755.62L932.15 746.34L937.58 753.14L943.01 754.17L948.45 747.99L953.88 753.14L959.31 742.63L964.74 739.13L970.17 743.46L975.60 751.70L981.03 742.63L986.47 729.24L991.90 747.17L997.33 742.22L1002.76 737.69L1008.19 740.57L1013.62 742.84L1019.06 740.16L1024.49 745.31L1029.92 751.91L1035.35 743.87L1040.78 745.52L1046.21 734.59L1051.64 739.13L1057.08 732.95L1062.51 747.99L1067.94 752.53L1073.37 746.96L1078.80 745.11L1084.23 717.90L1089.67 736.04L1095.10 742.22L1100.53 745.11L1105.96 752.11L1111.39 746.75L1116.82 753.14L1122.25 750.05L1127.69 742.63L1133.12 744.28L1138.55 752.94L1143.98 741.19L1149.41 734.59L1154.84 751.08L1160.28 743.87L1165.71 735.42L1171.14 735.42L1176.57 743.87L1182.00 737.48L1187.43 743.87L1192.86 739.13L1198.30 735.42L1203.73 716.46L1209.16 697.91L1214.59 745.31L1220.02 703.68L1225.45 712.75L1230.88 742.22L1236.32 706.56L1241.75 729.85L1247.18 745.31L1252.61 698.94L1258.04 731.92L1263.47 752.53L1268.91 690.28L1274.34 748.40L1279.77 728.41L1285.20 759.74L1285.20 778.70Z" fill="#4b9cdb" fill-opacity="0.56"/><path d="M785.5 501V779" stroke="#5a5a5a" stroke-width="1" fill="none"/><path d="M785.5 504.7H1246" stroke="#8cbb84" stroke-width="1.8" fill="none"/><g font-size="9.4" letter-spacing="-0.13" fill="#000" stroke="#000" stroke-width=".1"><text x="783.2" y="782.40" text-anchor="end">0</text><text x="783.2" y="749.80" text-anchor="end">50</text><text x="783.2" y="716.80" text-anchor="end">100</text><text x="783.2" y="683.80" text-anchor="end">150</text><text x="783.2" y="650.80" text-anchor="end">200</text><text x="783.2" y="617.80" text-anchor="end">250</text><text x="783.2" y="584.80" text-anchor="end">300</text><text x="783.2" y="551.80" text-anchor="end">350</text><text x="783.2" y="518.80" text-anchor="end">400</text><text x="847.55" y="790.6" text-anchor="middle">2025-04-07</text><text x="909.60" y="790.6" text-anchor="middle">2025-04-18</text><text x="972.45" y="790.6" text-anchor="middle">2025-04-30</text><text x="1035.55" y="790.6" text-anchor="middle">2025-05-12</text><text x="1098.60" y="790.6" text-anchor="middle">2025-05-23</text><text x="1160.50" y="790.6" text-anchor="middle">2025-06-04</text><text x="1223.30" y="790.6" text-anchor="middle">2025-06-15</text></g></svg>
<span class="t" style="left:796.60px;top:823.53px;font-size:10px;line-height:10px;color:#3a3a3a;-webkit-text-stroke:.14px #3a3a3a;letter-spacing:0.008px;">Package day limit</span>
<div class="abs" style="left:779px;top:827.2px;width:14.5px;height:3.6px;background:#8cb983"></div>
</div></body></html>
